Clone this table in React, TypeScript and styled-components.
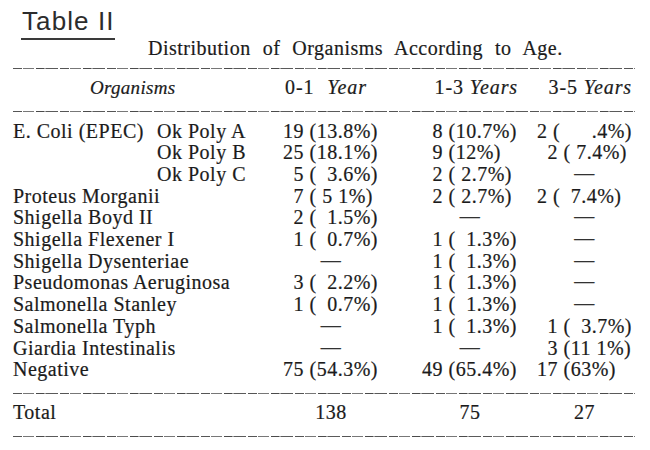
import React from "react";
import styled, { createGlobalStyle } from "styled-components";

const F = "\u2007";

type Align = "left" | "right" | "center";
type Col = 1 | 2 | 3;

interface Cell {
  t: string;
  a: Align;
}

interface Row {
  label: string;
  sub?: string;
  cells: [Cell, Cell, Cell];
}

const L = (t: string): Cell => ({ t, a: "left" });
const D: Cell = { t: "\u2014", a: "center" };

const rows: Row[] = [
  { label: "E. Coli (EPEC)", sub: "Ok Poly A", cells: [L("19 (13.8%)"), L(`${F}8 (10.7%)`), L(`2 (${F}${F}${F}.4%)`)] },
  { label: "", sub: "Ok Poly B", cells: [L("25 (18.1%)"), L(`${F}9 (12%)`), L(`${F}2 ( 7.4%)`)] },
  { label: "", sub: "Ok Poly C", cells: [L(`${F}5 (${F}3.6%)`), L(`${F}2 ( 2.7%)`), D] },
  { label: "Proteus Morganii", cells: [L(`${F}7 ( 5 1%)`), L(`${F}2 ( 2.7%)`), L(`2 (${F}7.4%)`)] },
  { label: "Shigella Boyd II", cells: [L(`${F}2 (${F}1.5%)`), D, D] },
  { label: "Shigella Flexener I", cells: [L(`${F}1 (${F}0.7%)`), L(`${F}1 (${F}1.3%)`), D] },
  { label: "Shigella Dysenteriae", cells: [D, L(`${F}1 (${F}1.3%)`), D] },
  { label: "Pseudomonas Aeruginosa", cells: [L(`${F}3 (${F}2.2%)`), L(`${F}1 (${F}1.3%)`), D] },
  { label: "Salmonella Stanley", cells: [L(`${F}1 (${F}0.7%)`), L(`${F}1 (${F}1.3%)`), D] },
  { label: "Salmonella Typh", cells: [D, L(`${F}1 (${F}1.3%)`), L(`${F}1 (${F}3.7%)`)] },
  { label: "Giardia Intestinalis", cells: [D, D, L(`${F}3 (11 1%)`)] },
  { label: "Negative", cells: [L("75 (54.3%)"), L("49 (65.4%)"), L("17 (63%)")] },
];

const colPad: Record<Col, string> = {
  1: "0 21px 0 13px",
  2: "0 12px 0 22px",
  3: "0 18px 0 7px",
};

const GlobalStyle = createGlobalStyle`
  html, body {
    margin: 0;
    padding: 0;
    background: #ffffff;
  }
  body {
    font-family: "Liberation Serif", "Times New Roman", serif;
    color: #1b1b1b;
  }
`;

const Page = styled.main`
  width: 650px;
  height: 450px;
  box-sizing: border-box;
  padding: 6px 0 0 13px;
  overflow: hidden;
  background: #ffffff;
  -webkit-text-stroke: 0.2px #1b1b1b;
`;

const Heading = styled.header`
  display: flex;
  flex-direction: column;
  align-items: flex-start;
`;

const Caption = styled.h1`
  margin: 0 0 0 8px;
  padding: 0 0 2px 1px;
  font-family: "Liberation Sans", Arial, sans-serif;
  font-weight: 400;
  font-size: 26px;
  line-height: 30px;
  letter-spacing: 1.1px;
  color: #2c2c2c;
  -webkit-text-stroke: 0;
  border-bottom: 2px solid #3a3a3a;
`;

const Title = styled.h2`
  margin: -3px 0 0 135px;
  font-weight: 400;
  font-size: 20px;
  line-height: 22px;
  letter-spacing: 0.5px;
  word-spacing: 6.5px;
  white-space: nowrap;
`;

const Rule = styled.div<{ $mt?: number }>`
  width: 622px;
  height: 1.5px;
  margin-top: ${(p) => p.$mt ?? 0}px;
  background: repeating-linear-gradient(
    90deg,
    #555 0 9px,
    transparent 9px 10px,
    #777 10px 21px,
    transparent 21px 23px,
    #4a4a4a 23px 31px,
    #9a9a9a 31px 33px,
    #5a5a5a 33px 45px,
    transparent 45px 47px
  );
`;

const Section = styled.section<{ $pt: number; $pb: number }>`
  display: grid;
  grid-template-columns: 257px 130px 130px 120px;
  grid-auto-rows: 21.7px;
  padding: ${(p) => p.$pt}px 0 ${(p) => p.$pb}px;
  font-size: 20px;
  line-height: 21.7px;
  letter-spacing: 0.5px;
  white-space: pre;
`;

const HeadSection = styled(Section)`
  grid-auto-rows: 21.4px;
  line-height: 21.4px;
  letter-spacing: 0.9px;
`;

const Label = styled.div`
  display: flex;
  justify-content: space-between;
  padding-right: 24px;
`;

const HeadLabel = styled.div`
  padding-left: 77px;
  font-size: 19px;
  letter-spacing: 0.3px;
`;

const Value = styled.div<{ $col: Col; $align: Align }>`
  padding: ${(p) => colPad[p.$col]};
  text-align: ${(p) => p.$align};
`;

const HeadValue = styled(Value)<{ $shift?: number; $ws?: number }>`
  padding-left: ${(p) => p.$shift ?? 0}px;
  word-spacing: ${(p) => p.$ws ?? 0}px;
`;

const Dash = styled.span`
  display: inline-block;
  transform: translateY(-1px);
  color: #3a3a3a;
`;

const Em = styled.em`
  font-style: italic;
`;

export default function App() {
  return (
    <>
      <GlobalStyle />
      <Page>
        <Heading>
          <Caption>Table II</Caption>
          <Title>Distribution of Organisms According to Age.</Title>
        </Heading>
        <Rule $mt={8.5} />
        <HeadSection $pt={8.4} $pb={12.2}>
          <HeadLabel>
            <Em>Organisms</Em>
          </HeadLabel>
          <HeadValue $col={1} $align="left" $shift={15} $ws={7}>
            {"0-1 "}
            <Em>Year</Em>
          </HeadValue>
          <Value $col={2} $align="right">
            {"1-3 "}
            <Em>Years</Em>
          </Value>
          <Value $col={3} $align="right">
            {"3-5 "}
            <Em>Years</Em>
          </Value>
        </HeadSection>
        <Rule />
        <Section $pt={8.2} $pb={12}>
          {rows.map((r, idx) => (
            <React.Fragment key={idx}>
              <Label>
                <span>{r.label}</span>
                {r.sub ? <span>{r.sub}</span> : null}
              </Label>
              {r.cells.map((c, i) => (
                <Value key={i} $col={(i + 1) as Col} $align={c.a}>
                  {c.a === "center" ? <Dash>{c.t}</Dash> : c.t}
                </Value>
              ))}
            </React.Fragment>
          ))}
        </Section>
        <Rule />
        <Section $pt={7.8} $pb={12}>
          <Label>
            <span>Total</span>
          </Label>
          <Value $col={1} $align="center">138</Value>
          <Value $col={2} $align="center">75</Value>
          <Value $col={3} $align="center">27</Value>
        </Section>
        <Rule />
      </Page>
    </>
  );
}
